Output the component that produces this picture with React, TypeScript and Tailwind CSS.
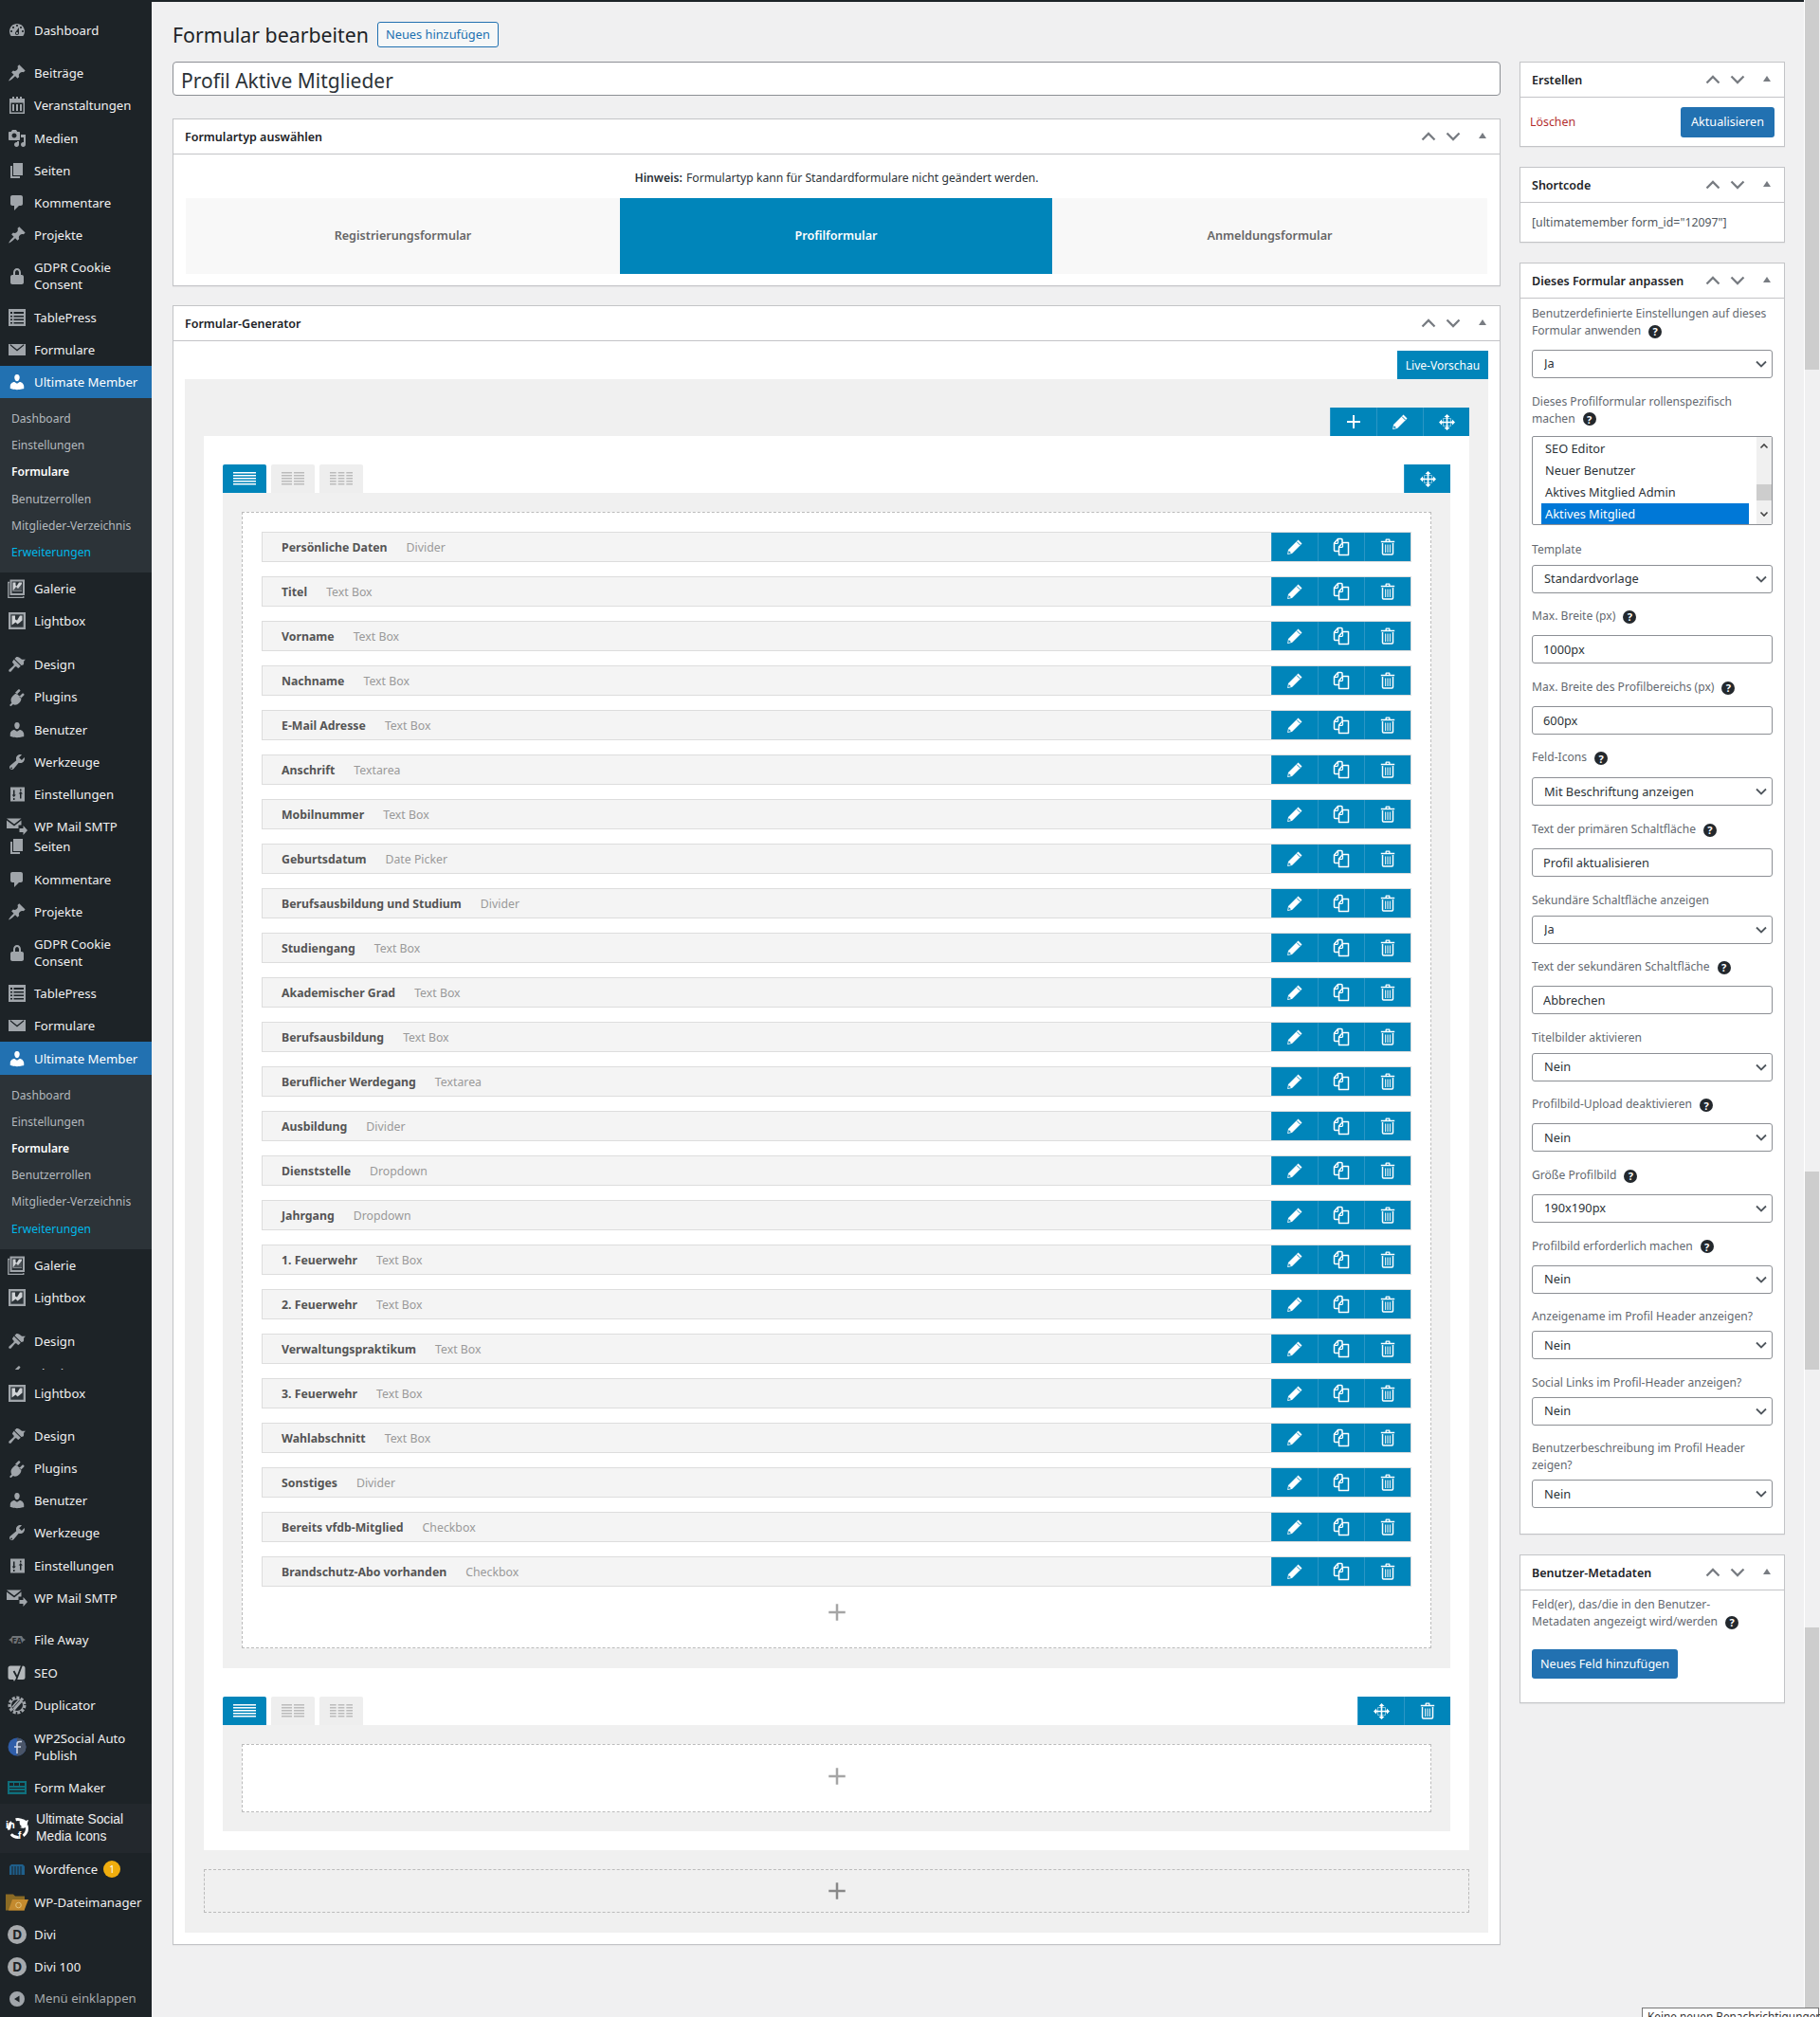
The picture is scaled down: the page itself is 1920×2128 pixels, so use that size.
import React from "react";

const P: Record<string, string> = {
  dashboard: "M3.76 16h12.48c1.1-1.37 1.76-3.11 1.76-5 0-4.42-3.58-8-8-8s-8 3.58-8 8c0 1.89.66 3.63 1.76 5zM10 4c.55 0 1 .45 1 1s-.45 1-1 1-1-.45-1-1 .45-1 1-1zM6 6c.55 0 1 .45 1 1s-.45 1-1 1-1-.45-1-1 .45-1 1-1zm8 0c.55 0 1 .45 1 1s-.45 1-1 1-1-.45-1-1 .45-1 1-1zm-5.37 5.55L12 7v6c0 1.1-.9 2-2 2s-2-.9-2-2c0-.57.24-1.08.63-1.45zM4 10c.55 0 1 .45 1 1s-.45 1-1 1-1-.45-1-1 .45-1 1-1zm12 0c.55 0 1 .45 1 1s-.45 1-1 1-1-.45-1-1 .45-1 1-1zm-5 3c0-.55-.45-1-1-1s-1 .45-1 1 .45 1 1 1 1-.45 1-1z",
  pin: "M10.44 3.02l1.82-1.82 6.36 6.35-1.83 1.82c-1.05-.68-2.48-.57-3.41.36l-.75.75c-.92.93-1.04 2.35-.35 3.41l-1.83 1.82-2.41-2.41-2.8 2.79c-.42.42-3.38 2.71-3.8 2.29s1.86-3.39 2.28-3.81l2.79-2.79L4.1 9.36l1.83-1.82c1.05.69 2.48.57 3.4-.36l.75-.75c.93-.92 1.05-2.35.36-3.41z",
  comment: "M5 2h9c1.1 0 2 .9 2 2v7c0 1.1-.9 2-2 2h-2l-5 5v-5H5c-1.1 0-2-.9-2-2V4c0-1.1.9-2 2-2z",
  page: "M6 15V2h10v13H6zm-1 1h8v2H3V5h2v11z",
  media: "M13 11V4c0-.55-.45-1-1-1h-1.67L9 1H5L3.67 3H2c-.55 0-1 .45-1 1v7c0 .55.45 1 1 1h10c.55 0 1-.45 1-1zM7 4.5c1.38 0 2.5 1.12 2.5 2.5S8.38 9.5 7 9.5 4.5 8.38 4.5 7 5.62 4.5 7 4.5zM14 6h5v10.5c0 1.38-1.12 2.5-2.5 2.5S14 17.88 14 16.5s1.12-2.5 2.5-2.5c.17 0 .34.02.5.05V9h-3V6zm-4 8.05V13h2v3.5c0 1.38-1.12 2.5-2.5 2.5S7 17.88 7 16.5 8.12 14 9.5 14c.17 0 .34.02.5.05z",
  user: "M10 9.25c-2.27 0-2.73-3.44-2.73-3.44C7 4.02 7.82 2 9.97 2c2.16 0 2.98 2.02 2.71 3.81 0 0-.41 3.44-2.68 3.44zm0 2.57L12.72 10c2.39 0 4.52 2.33 4.52 4.53v2.49s-3.65 1.13-7.24 1.13c-3.65 0-7.24-1.13-7.24-1.13v-2.49c0-2.25 1.94-4.48 4.47-4.48z",
  tools: "M16.68 9.77c-1.34 1.34-3.3 1.67-4.95.99l-5.41 6.52c-.99.99-2.59.99-3.57 0-.99-.98-.99-2.58 0-3.57l6.52-5.42c-.68-1.65-.35-3.61.99-4.95 1.28-1.28 3.12-1.62 4.72-1.06l-2.89 2.89 2.82 2.82 2.86-2.87c.53 1.58.18 3.39-1.09 4.65zM4.66 15.66c-.34-.34-.89-.34-1.24 0-.34.35-.34.9 0 1.24.35.35.9.35 1.24 0 .35-.34.35-.89 0-1.24z",
  plugin: "M13.11 4.36L9.87 7.6 8 5.73l3.24-3.24c.35-.34 1.05-.34 1.4 0l.47.47c.39.39.39 1.01 0 1.4zm4.2 4.2L14.07 11.8l-1.87-1.87 3.24-3.24c.35-.34 1.05-.34 1.4 0l.47.47c.39.39.39 1.01 0 1.4zm-7.42-1.6l4.15 4.15c.9 1.6-.2 3.9-1.9 5.6-1.91 1.91-4.5 2.6-6.2 1.4l-2.6 2.2-1.3-1.3 2.3-2.5C2.9 14.2 3.4 11.5 5.3 9.6c1.7-1.7 3-3.1 4.59-2.64z",
  brush: "M14.5 11L7.4 4l1.5-1.500c.5-.6 2.3-.5 3.5.3 1.200.8 1.500 1.300 2.200 1.600 1 .5 4.400.4 4.400.4s-1.700 1.100-1.900 2.200c-.2 1.200.5 2-.6 3.500zM6.700 4.700l7.100 7.100-1.800 1.800c-.4.4-1.100.4-1.500 0l-1-1c-.5-.5-1.400-.5-1.900.1L3.600 17.400c-.5.5-1.500.5-2 0s-.5-1.500 0-2l4.700-4.200c.5-.5.5-1.400 0-1.900l-1-1c-.4-.4-.4-1.100 0-1.500z",
  sliders: "M3 2.500h15v15H3zM6 5.500v5H4.600L6.700 13l2.100-2.500H7.500v-5zM6 14v2h1.500v-2zM13 4.500v2h1.500v-2zM13 9.500H11.700L13.800 7l2.100 2.500h-1.400v5H13z",
  mail: "M1 4h18v12H1zM2.800 4L10 9.800 17.200 4v1.500L10 11.600 2.800 5.500z",
  lock: "M14 9h1c1 0 2 .9 2 2v6c0 1.100-.9 2-2 2H5c-1.100 0-2-.9-2-2v-6c0-1.100 1-2 2-2h1V6.500C6 4 7.800 2 10 2s4 2 4 4.500zM8 9h4V6.500C12 5.100 11.100 4 10 4S8 5.100 8 6.500z",
  arrowL: "M10 2a8 8 0 1 0 0 16 8 8 0 0 0 0-16zm2.500 4.500v7L7 10z",
};

function Ic({ n, c = "#a0a5aa", s = 20 }: { n: string; c?: string; s?: number }) {
  return (
    <svg width={s} height={s} viewBox="0 0 20 20" fill={c} fillRule="evenodd">
      <path d={P[n]} />
    </svg>
  );
}

function Custom({ n }: { n: string }) {
  const c = "#a0a5aa";
  if (n === "calendar")
    return (
      <svg width="20" height="20" viewBox="0 0 20 20">
        <path fill={c} d="M2 3h3V1h2v2h2V1h2v2h2V1h2v2h3v16H2z" />
        <path fill="#1d2327" d="M3.500 7.500h13v10h-13z" />
        <path fill={c} d="M5 9h2v7H5zM9 9h2v7H9zM13 9h2v7h-2z" />
      </svg>
    );
  if (n === "table")
    return (
      <svg width="22" height="22" viewBox="0 0 22 22">
        <path fill={c} fillRule="evenodd" d="M2 2h18v18H2zM4 5v2h2V5zM7.500 5v2H18V5zM4 9v1.500h2V9zM7.500 9v1.500H18V9zM4 12.500V14h2v-1.500zM7.500 12.500V14H18v-1.500zM4 16v1.500h2V16zM7.500 16v1.500H18V16z" />
      </svg>
    );
  if (n === "gallery")
    return (
      <svg width="20" height="20" viewBox="0 0 20 20">
        <path fill="none" stroke={c} strokeWidth="1.300" d="M2 3.500H.8v16h16v-1.500" />
        <path fill={c} d="M2.500 .5h15.500v16.500H2.500z" />
        <path fill="#2c3338" d="M4.500 2.500h11.500v12.500H4.500z" />
        <path fill="#d0d3d6" d="M5.500 3.500h3v3l1 1 2.500-4h3v9h-9.500z" />
        <path fill="#2c3338" d="M6 12l3-4 2 2 4-5v7z" opacity="0.800" />
      </svg>
    );
  if (n === "lightbox")
    return (
      <svg width="20" height="20" viewBox="0 0 20 20">
        <path fill={c} d="M1 1h18v18H1z" />
        <path fill="#2c3338" d="M3.300 3.300h13.400v13.400H3.300z" />
        <path fill="#d0d3d6" d="M4.500 4.500h3.500v4l2 1 3-5h2.500v5l-3 2.500-2 1.500-2-2-4 3z" />
      </svg>
    );
  if (n === "smtp")
    return (
      <svg width="22" height="22" viewBox="0 0 22 22">
        <path fill={c} d="M0 2.500h15.500L8 8.500zM0 4.500l8 6 7.500-6v5h-3v3.500H0z" />
        <path fill={c} d="M13.500 13h4v-3l4.500 5-4.500 5v-3h-4z" />
      </svg>
    );
  if (n === "fa")
    return (
      <svg width="20" height="20" viewBox="0 0 20 20">
        <path fill="#6f7478" d="M1 10l2.500-1.500L5 6h10l1.500 2.500L19 10l-2.500 1.500L15 14H5l-1.500-2.500z" />
        <text x="10" y="13.500" fontSize="9" textAnchor="middle" fill="#1d2327" fontWeight="700">FA</text>
      </svg>
    );
  if (n === "seo")
    return (
      <svg width="20" height="20" viewBox="0 0 20 20">
        <path fill="#b4b8bb" d="M3 2.500h13a2.500 2.500 0 0 1 2.500 2.500v9.500a2.500 2.500 0 0 1-2.500 2.500H8l-1 2-1-2H3A2.500 2.500 0 0 1 .5 14.500V5A2.500 2.500 0 0 1 3 2.500z" />
        <path fill="none" stroke="#1d2327" strokeWidth="1.800" d="M6.500 8l3.500 6.500M15.500.5L8.500 19" />
      </svg>
    );
  if (n === "dup")
    return (
      <svg width="22" height="22" viewBox="0 0 22 22">
        <circle cx="11" cy="11" r="8" fill="none" stroke={c} strokeWidth="3" strokeDasharray="3 1.600" />
        <circle cx="11" cy="11" r="6.600" fill="none" stroke={c} strokeWidth="1.200" />
        <path stroke={c} strokeWidth="1.500" d="M6 13l7-8M8 16l8-9M7 15l8-9" />
      </svg>
    );
  if (n === "wp2s")
    return (
      <svg width="20" height="20" viewBox="0 0 20 20">
        <circle cx="10" cy="10" r="9.500" fill="#2f5da8" />
        <path fill="#4a5568" d="M10 .5a9.500 9.500 0 0 1 0 19z" />
        <path fill="none" stroke="#cfd6e6" strokeWidth="1.600" d="M15 4.500h-2.500c-1.500 0-2.500.8-2.500 2.500v10M7 10h7" />
      </svg>
    );
  if (n === "formmaker")
    return (
      <svg width="20" height="16" viewBox="0 0 20 16">
        <path fill="#0f6f7c" d="M0 1h20v14H0z" />
        <path fill="#1d2327" d="M2 3h4v3H2zM7 3h5v3H7zM13 3h5v3h-5zM2 8h16v1H2zM2 11h16v1.500H2z" />
      </svg>
    );
  if (n === "usmi")
    return (
      <svg width="26" height="26" viewBox="0 0 26 26">
        <circle cx="13" cy="13" r="9.500" fill="none" stroke="#fff" strokeWidth="3" strokeDasharray="9 5" />
        <text x="0" y="13" fontSize="11" fontWeight="700" fill="#fff">in</text>
        <text x="13" y="24" fontSize="10" fontWeight="700" fill="#fff">f</text>
        <path fill="#fff" d="M15 5c2-2 5-2 6 0l3-1-1 3c0 5-4 7-8 5 1 0 2-1 2-1-2-1-3-4-2-6z" />
      </svg>
    );
  if (n === "wordfence")
    return (
      <svg width="18" height="12" viewBox="0 0 18 12">
        <path fill="#1f5f8b" d="M1 3l2-2h12l2 2v9H1z" />
        <path stroke="#1d2327" d="M4 3v9M7 3v9M10 3v9M13 3v9" />
      </svg>
    );
  if (n === "folder")
    return (
      <svg width="24" height="18" viewBox="0 0 24 18">
        <path fill="#8a6a24" d="M0 .5h8l2 2h10v15H0z" />
        <path fill="#c48a2e" d="M3 17.500L7 6h17l-4.500 11.500z" />
        <circle cx="13.500" cy="12" r="2.800" fill="none" stroke="#e2c27c" strokeWidth="1" />
      </svg>
    );
  if (n === "divi")
    return (
      <span className="flex h-[20px] w-[20px] items-center justify-center rounded-full bg-[#a7aaad] text-[14px] font-bold leading-none text-[#1d2327]">
        D
      </span>
    );
  return null;
}

type Item = { l: string; i: string; two?: boolean; clip?: boolean; c?: boolean };

function MenuItem({ l, i, two, clip, c, cur, badge }: Item & { cur?: boolean; badge?: boolean }) {
  const lines = l.split("|");
  return (
    <div className={(clip ? "h-[13px] overflow-hidden " : "") + (cur ? "bg-[#2271b1] text-white " : "text-[#f0f0f1] ")}>
      <div className={(two ? "h-[52.2px] " : "h-[34.2px] ") + "flex items-center"}>
        <div className="flex w-[36px] shrink-0 items-center justify-center">
          {c ? <Custom n={i} /> : <Ic n={i} c={cur ? "#fff" : "#a0a5aa"} />}
        </div>
        <div className="text-[13.2px] leading-[18px]">
          {lines.map((t) => (
            <div key={t} className="whitespace-nowrap">{t}</div>
          ))}
        </div>
        {badge && (
          <span className="ml-[6px] flex h-[18px] w-[18px] items-center justify-center rounded-full bg-[#f0ad0e] text-[10px] text-white">1</span>
        )}
      </div>
    </div>
  );
}

const Sub = () => (
  <div className="bg-[#2c3338] pb-[7px] pt-[8px] text-[12.1px] text-[#b4b9be]">
    {["Dashboard", "Einstellungen", "Formulare", "Benutzerrollen", "Mitglieder-Verzeichnis", "Erweiterungen"].map((t) => (
      <div
        key={t}
        className={
          "flex h-[28.2px] items-center pl-[12px] " +
          (t === "Formulare" ? "font-semibold text-white" : t === "Erweiterungen" ? "text-[#00b9eb]" : "")
        }
      >
        {t}
      </div>
    ))}
  </div>
);

const first: Item[] = [
  { l: "Beiträge", i: "pin" },
  { l: "Veranstaltungen", i: "calendar", c: true },
  { l: "Medien", i: "media" },
  { l: "Seiten", i: "page" },
  { l: "Kommentare", i: "comment" },
  { l: "Projekte", i: "pin" },
  { l: "GDPR Cookie|Consent", i: "lock", two: true },
  { l: "TablePress", i: "table", c: true },
  { l: "Formulare", i: "mail" },
];
const lower: Item[] = [
  { l: "Plugins", i: "plugin" },
  { l: "Benutzer", i: "user" },
  { l: "Werkzeuge", i: "tools" },
  { l: "Einstellungen", i: "sliders" },
];

function Sidebar() {
  return (
    <aside className="h-full w-[160px] shrink-0 overflow-hidden bg-[#1d2327] pt-[15px]">
      <MenuItem l="Dashboard" i="dashboard" />
      <div className="h-[11px]" />
      {first.map((m) => <MenuItem key={m.l} {...m} />)}
      <MenuItem l="Ultimate Member" i="user" cur />
      <Sub />
      <MenuItem l="Galerie" i="gallery" c />
      <MenuItem l="Lightbox" i="lightbox" c />
      <div className="h-[11.6px]" />
      <MenuItem l="Design" i="brush" />
      {lower.map((m) => <MenuItem key={m.l} {...m} />)}
      <MenuItem l="WP Mail SMTP" i="smtp" c />
      <div className="-mt-[13px]" />
      {first.map((m) => <MenuItem key={m.l + "2"} {...m} />).slice(3)}
      <MenuItem l="Ultimate Member" i="user" cur />
      <Sub />
      <MenuItem l="Galerie" i="gallery" c />
      <MenuItem l="Lightbox" i="lightbox" c />
      <div className="h-[12px]" />
      <MenuItem l="Design" i="brush" />
      <MenuItem l="Plugins" i="plugin" clip />
      <div className="h-[8px]" />
      <MenuItem l="Lightbox" i="lightbox" c />
      <div className="h-[10.2px]" />
      <MenuItem l="Design" i="brush" />
      {lower.map((m) => <MenuItem key={m.l + "3"} {...m} />)}
      <MenuItem l="WP Mail SMTP" i="smtp" c />
      <div className="h-[10.6px]" />
      <MenuItem l="File Away" i="fa" c />
      <MenuItem l="SEO" i="seo" c />
      <MenuItem l="Duplicator" i="dup" c />
      <div className="h-[1px]" />
      <MenuItem l="WP2Social Auto|Publish" i="wp2s" c two />
      <MenuItem l="Form Maker" i="formmaker" c />
      <div className="flex h-[52px] items-center bg-[#23282d] font-['Liberation_Sans',sans-serif] text-[#f0f0f1]">
        <div className="flex w-[38px] shrink-0 items-center justify-center"><Custom n="usmi" /></div>
        <div className="text-[13.8px] leading-[18px]">Ultimate Social<br />Media Icons</div>
      </div>
      <MenuItem l="Wordfence" i="wordfence" c badge />
      <MenuItem l="WP-Dateimanager" i="folder" c />
      <MenuItem l="Divi" i="divi" c />
      <MenuItem l="Divi 100" i="divi" c />
      <div className="flex h-[34px] items-center text-[#a7aaad]">
        <div className="flex w-[36px] shrink-0 items-center justify-center"><Ic n="arrowL" /></div>
        <div className="text-[13.2px]">Menü einklappen</div>
      </div>
    </aside>
  );
}

function HeaderCtl() {
  return (
    <div className="flex items-center">
      <svg width="16" height="16" viewBox="0 0 16 16" className="mr-[10px]"><path d="M1.500 11.500L8 5l6.500 6.500" fill="none" stroke="#787c82" strokeWidth="2.300" /></svg>
      <svg width="16" height="16" viewBox="0 0 16 16" className="mr-[18px]"><path d="M1.500 4.500L8 11l6.500-6.500" fill="none" stroke="#787c82" strokeWidth="2.300" /></svg>
      <svg width="10" height="8" viewBox="0 0 10 8" className="mb-[3px] mr-[13px]"><path d="M5 1l4 6H1z" fill="#787c82" /></svg>
    </div>
  );
}

function Box({ title, className = "", children }: { title: string; className?: string; children: React.ReactNode }) {
  return (
    <section className={"border border-[#c3c4c7] bg-white shadow-[0_1px_1px_rgba(0,0,0,0.04)] " + className}>
      <div className="flex h-[37px] items-center justify-between border-b border-[#c3c4c7] pl-[12px]">
        <h2 className="pt-[2px] text-[12.5px] font-semibold text-[#1d2327]">{title}</h2>
        <HeaderCtl />
      </div>
      {children}
    </section>
  );
}

const Pencil = ({ s = 18 }: { s?: number }) => (
  <svg width={s} height={s} viewBox="0 0 18 18">
    <path fill="#fff" d="M12.500 1.500l4 4L6 16l-4.800 1L2 12zM2.700 13l-.6 2.900 2.900-.6z" />
    <path stroke="#0085ba" strokeWidth="1" d="M11 3.500l3.500 3.500" />
  </svg>
);
const Copy = () => (
  <svg width="20" height="20" viewBox="0 0 20 20" fill="none" stroke="#fff" strokeWidth="1.500" strokeLinejoin="round">
    <path d="M7 14.500H3.500c-.6 0-1-.4-1-1V6l4-4.500h3.500c.6 0 1 .4 1 1V5.500" />
    <path d="M6.500 2v3.500c0 .5-.3.8-.8.8H2.500" strokeWidth="1.200" />
    <path d="M7.500 18.500V10l4-4.500h6v13z" />
    <path d="M11.500 6v3.500c0 .5-.3.8-.8.8H7.500" strokeWidth="1.200" />
  </svg>
);
const Trash = () => (
  <svg width="16" height="18" viewBox="0 0 16 18">
    <path fill="#fff" d="M.8 2.800h4.700V1.500C5.500 1 6 .5 6.500.5h3c.5 0 1 .5 1 1v1.300h4.700v1.500H.8zM6.800 2.800h2.400V1.800H6.800z" />
    <path fill="none" stroke="#fff" strokeWidth="1.500" d="M2.500 5v11c0 .6.400 1 1 1h9c.6 0 1-.4 1-1V5" />
    <path fill="#d7e8f1" d="M5 6.500h1.200V15H5zM7.400 6.500h1.200V15H7.400zM9.800 6.500H11V15H9.800z" />
  </svg>
);
const Move = () => (
  <svg width="17" height="17" viewBox="0 0 17 17" fill="#fff">
    <path d="M8.500 0l3 3h-2v1H7.500V3h-2zM8.500 17l-3-3h2v-1h2v1h2zM0 8.500l3-3v2h1v2H3v2zM17 8.500l-3 3v-2h-1v-2h1v-2z" />
    <path d="M3.700 7.700h9.600v1.600H3.700zM7.700 3.700h1.600v9.600H7.700z" />
    <path fill="none" stroke="#fff" strokeWidth="1" d="M4.500 4.500h8v8h-8z" opacity="0.500" />
  </svg>
);
const Plus = ({ c = "#fff", s = 16 }: { c?: string; s?: number }) => (
  <svg width={s} height={s} viewBox="0 0 16 16"><path fill={c} d="M7 1h2v6h6v2H9v6H7V9H1V7h6z" /></svg>
);

function Act({ children }: { children: React.ReactNode }) {
  return (
    <div className="flex h-[30px] w-[49px] items-center justify-center border-l border-[#2b96c5] bg-[#0085ba]">{children}</div>
  );
}

const fields: [string, string][] = [
  ["Persönliche Daten", "Divider"],
  ["Titel", "Text Box"],
  ["Vorname", "Text Box"],
  ["Nachname", "Text Box"],
  ["E-Mail Adresse", "Text Box"],
  ["Anschrift", "Textarea"],
  ["Mobilnummer", "Text Box"],
  ["Geburtsdatum", "Date Picker"],
  ["Berufsausbildung und Studium", "Divider"],
  ["Studiengang", "Text Box"],
  ["Akademischer Grad", "Text Box"],
  ["Berufsausbildung", "Text Box"],
  ["Beruflicher Werdegang", "Textarea"],
  ["Ausbildung", "Divider"],
  ["Dienststelle", "Dropdown"],
  ["Jahrgang", "Dropdown"],
  ["1. Feuerwehr", "Text Box"],
  ["2. Feuerwehr", "Text Box"],
  ["Verwaltungspraktikum", "Text Box"],
  ["3. Feuerwehr", "Text Box"],
  ["Wahlabschnitt", "Text Box"],
  ["Sonstiges", "Divider"],
  ["Bereits vfdb-Mitglied", "Checkbox"],
  ["Brandschutz-Abo vorhanden", "Checkbox"],
];

function Field({ name, type }: { name: string; type: string }) {
  return (
    <div className="mb-[15px] flex h-[32px] items-center border border-[#dddddd] bg-[#f4f4f4] pl-[20px]">
      <span className="pt-[3px] text-[12.3px] font-bold text-[#555]">{name}</span>
      <span className="ml-[20px] pt-[3px] text-[12.3px] text-[#999]">{type}</span>
      <div className="ml-auto flex">
        <Act><Pencil /></Act>
        <Act><Copy /></Act>
        <Act><Trash /></Act>
      </div>
    </div>
  );
}

function ColIcon({ cols, c }: { cols: number; c: string }) {
  const w = 24;
  const gap = 2;
  const cw = (w - gap * (cols - 1)) / cols;
  const xs = Array.from({ length: cols }, (_, i) => i * (cw + gap));
  return (
    <svg width={w} height="16" viewBox="0 0 24 16">
      {xs.map((x) => [1, 4, 7, 10, 13].map((y) => <rect key={x + "-" + y} x={x} y={y} width={cw} height="1.500" fill={c} />))}
    </svg>
  );
}

function Tabs() {
  return (
    <div className="flex gap-[5px]">
      <div className="flex h-[30px] w-[46px] items-center justify-center rounded-t-[2px] bg-[#0085ba]"><ColIcon cols={1} c="#fff" /></div>
      <div className="flex h-[30px] w-[46px] items-center justify-center rounded-t-[2px] bg-[#eee]"><ColIcon cols={2} c="#bbb" /></div>
      <div className="flex h-[30px] w-[46px] items-center justify-center rounded-t-[2px] bg-[#eee]"><ColIcon cols={3} c="#bbb" /></div>
    </div>
  );
}

function Help() {
  return (
    <span className="-my-[4px] ml-[8px] inline-flex h-[14px] w-[14px] items-center justify-center rounded-full bg-[#23282d] align-middle text-[11px] font-bold leading-none text-white">?</span>
  );
}

function Label({ children, help, gap }: { children: React.ReactNode; help?: boolean; gap: string }) {
  return (
    <div className={"text-[12.1px] leading-[18px] text-[#646970] " + gap}>
      {children}
      {help && <Help />}
    </div>
  );
}

function Sel({ v }: { v: string }) {
  return (
    <div className="relative mb-[15.6px]">
      <select
        defaultValue={v}
        className="block h-[30px] w-full appearance-none rounded-[3px] border border-[#8c8f94] bg-white pl-[12px] text-[12.8px] text-[#2c3338]"
      >
        <option>{v}</option>
      </select>
      <svg width="12" height="8" viewBox="0 0 12 8" className="pointer-events-none absolute right-[6px] top-[11px]">
        <path d="M1 1.500l5 5 5-5" fill="none" stroke="#50575e" strokeWidth="1.800" />
      </svg>
    </div>
  );
}

function Inp({ v }: { v: string }) {
  return (
    <input
      readOnly
      value={v}
      className="mb-[15.6px] block h-[30px] w-full rounded-[3px] border border-[#8c8f94] bg-white pl-[11px] text-[12.8px] text-[#2c3338]"
    />
  );
}

function ListBox() {
  const opts = ["SEO Editor", "Neuer Benutzer", "Aktives Mitglied Admin", "Aktives Mitglied"];
  return (
    <div className="mb-[17px] flex h-[94px] overflow-hidden rounded-[2px] border border-[#8c8f94] bg-white">
      <div className="flex-1 pl-[9px] pt-[1px]">
        {opts.map((o, i) => (
          <div
            key={o}
            className={
              "flex h-[23px] items-center pl-[4px] text-[12.8px] " +
              (i === 3 ? "bg-[#0078d7] text-white" : "text-[#2c3338]")
            }
          >
            {o}
          </div>
        ))}
      </div>
      <div className="ml-[8px] flex w-[16px] flex-col items-center bg-[#f0f0f0]">
        <svg width="10" height="8" viewBox="0 0 10 8" className="mt-[6px]"><path d="M1.500 5.500L5 2l3.500 3.500" fill="none" stroke="#444" strokeWidth="1.600" /></svg>
        <div className="mt-[36px] h-[17px] w-full bg-[#cdcdcd]" />
        <svg width="10" height="8" viewBox="0 0 10 8" className="mt-[10px]"><path d="M1.500 2.500L5 6l3.500-3.500" fill="none" stroke="#444" strokeWidth="1.600" /></svg>
      </div>
    </div>
  );
}

function Right() {
  return (
    <div className="w-[280px] shrink-0">
      <Box title="Erstellen" className="h-[90px]">
        <div className="flex items-center justify-between pl-[10px] pr-[10px] pt-[10px]">
          <span className="text-[12.4px] text-[#b32d2e]">Löschen</span>
          <div className="flex h-[32px] w-[99px] items-center justify-center rounded-[3px] bg-[#2271b1] pt-[1px] text-[12.6px] text-white">Aktualisieren</div>
        </div>
      </Box>
      <Box title="Shortcode" className="mt-[21px] h-[80px]">
        <div className="pl-[12px] pt-[12px] text-[12.3px] leading-[18px] text-[#50575e]">[ultimatemember form_id="12097"]</div>
      </Box>
      <Box title="Dieses Formular anpassen" className="mt-[21px] h-[1342px]">
        <div className="px-[12px] pt-[7px]">
          <Label help gap="mb-[11px]">Benutzerdefinierte Einstellungen auf dieses<br />Formular anwenden</Label>
          <Sel v="Ja" />
          <Label help gap="mb-[9px]">Dieses Profilformular rollenspezifisch<br />machen</Label>
          <ListBox />
          <Label gap="mb-[7px]">Template</Label>
          <Sel v="Standardvorlage" />
          <Label help gap="mb-[11px]">Max. Breite (px)</Label>
          <Inp v="1000px" />
          <Label help gap="mb-[11px]">Max. Breite des Profilbereichs (px)</Label>
          <Inp v="600px" />
          <Label help gap="mb-[12px]">Feld-Icons</Label>
          <Sel v="Mit Beschriftung anzeigen" />
          <Label help gap="mb-[11px]">Text der primären Schaltfläche</Label>
          <Inp v="Profil aktualisieren" />
          <Label gap="mb-[7px]">Sekundäre Schaltfläche anzeigen</Label>
          <Sel v="Ja" />
          <Label help gap="mb-[11px]">Text der sekundären Schaltfläche</Label>
          <Inp v="Abbrechen" />
          <Label gap="mb-[7px]">Titelbilder aktivieren</Label>
          <Sel v="Nein" />
          <Label help gap="mb-[11px]">Profilbild-Upload deaktivieren</Label>
          <Sel v="Nein" />
          <Label help gap="mb-[11px]">Größe Profilbild</Label>
          <Sel v="190x190px" />
          <Label help gap="mb-[11px]">Profilbild erforderlich machen</Label>
          <Sel v="Nein" />
          <Label gap="mb-[6px]">Anzeigename im Profil Header anzeigen?</Label>
          <Sel v="Nein" />
          <Label gap="mb-[6px]">Social Links im Profil-Header anzeigen?</Label>
          <Sel v="Nein" />
          <Label gap="mb-[6px]">Benutzerbeschreibung im Profil Header<br />zeigen?</Label>
          <Sel v="Nein" />
        </div>
      </Box>
      <Box title="Benutzer-Metadaten" className="mt-[21px] h-[157px]">
        <div className="px-[12px] pt-[6px]">
          <Label help gap="mb-[20px]">Feld(er), das/die in den Benutzer-<br />Metadaten angezeigt wird/werden</Label>
          <div className="flex h-[31px] w-[154px] items-center justify-center rounded-[3px] bg-[#2271b1] pt-[2px] text-[12.6px] text-white">Neues Feld hinzufügen</div>
        </div>
      </Box>
    </div>
  );
}

function Left() {
  return (
    <div className="w-[1401px] shrink-0">
      <div className="flex h-[63px] items-start pt-[17px]">
        <h1 className="text-[21.3px] leading-[36px] text-[#1d2327]">Formular bearbeiten</h1>
        <div className="ml-[9px] mt-[4px] flex h-[27px] w-[128px] items-center justify-center rounded-[3px] border border-[#2271b1] bg-[#f6f7f7] pt-[1px] text-[12.8px] text-[#2271b1]">Neues hinzufügen</div>
      </div>
      <input
        readOnly
        value="Profil Aktive Mitglieder"
        className="block h-[36px] w-full rounded-[4px] border border-[#8c8f94] bg-white pl-[8px] pt-[4px] text-[21px] text-[#2c3338]"
      />
      <Box title="Formulartyp auswählen" className="mt-[24px] h-[177px]">
        <div className="px-[13px]">
          <div className="flex h-[46px] items-center justify-center pt-[5px] text-[12.2px] text-[#2c3338]">
            <b className="mr-[4px] font-semibold">Hinweis:</b> Formulartyp kann für Standardformulare nicht geändert werden.
          </div>
          <div className="flex h-[80px] text-[12.6px] font-semibold">
            <div className="flex w-[458px] items-center justify-center bg-[#f8f8f8] pt-[1px] text-[#666]">Registrierungsformular</div>
            <div className="flex w-[456px] items-center justify-center bg-[#0085ba] pt-[1px] text-white">Profilformular</div>
            <div className="flex flex-1 items-center justify-center bg-[#f8f8f8] pt-[1px] text-[#666]">Anmeldungsformular</div>
          </div>
        </div>
      </Box>
      <Box title="Formular-Generator" className="mt-[20px] h-[1730px]">
        <div className="px-[12px]">
          <div className="flex h-[40px] items-end justify-end">
            <div className="flex h-[30px] w-[96px] items-center justify-center bg-[#0085ba] pt-[1px] text-[12px] text-white">Live-Vorschau</div>
          </div>
          <div className="h-[1639px] bg-[#f0f0f0] px-[20px] pt-[30px]">
            <div className="flex justify-end">
              <Act><Plus /></Act>
              <Act><Pencil /></Act>
              <Act><Move /></Act>
            </div>
            <div className="h-[1492px] bg-white px-[20px] pt-[30px]">
              <div className="flex items-end justify-between">
                <Tabs />
                <Act><Move /></Act>
              </div>
              <div className="h-[1240px] bg-[#f0f0f0] px-[20px] pt-[20px]">
                <div className="h-[1199px] border border-dashed border-[#bbb] bg-white px-[20px] pt-[20px]">
                  {fields.map(([n, t]) => <Field key={n} name={n} type={t} />)}
                  <div className="flex justify-center pt-[2px]"><Plus c="#a5a5a5" s={20} /></div>
                </div>
              </div>
              <div className="mt-[30px] flex items-end justify-between">
                <Tabs />
                <div className="flex">
                  <Act><Move /></Act>
                  <Act><Trash /></Act>
                </div>
              </div>
              <div className="h-[112px] bg-[#f0f0f0] p-[20px]">
                <div className="flex h-[72px] items-center justify-center border border-dashed border-[#bbb] bg-white pb-[5px]"><Plus c="#a5a5a5" s={20} /></div>
              </div>
            </div>
            <div className="mt-[20px] flex h-[46px] items-center justify-center border border-dashed border-[#bbb]"><Plus c="#888" s={20} /></div>
          </div>
        </div>
      </Box>
    </div>
  );
}

function Scrollbar() {
  return (
    <div className="flex h-full w-[17px] shrink-0 flex-col border-l border-white bg-[#f0f0f1]">
      <div className="h-[390px] w-[15px] bg-[#cdcdcd]" />
      <div className="mt-[846px] h-[209px] w-[15px] bg-[#cdcdcd]" />
      <div className="mt-[272px] h-[411px] w-[15px] bg-[#cdcdcd]" />
    </div>
  );
}

export default function App() {
  return (
    <div className="relative flex h-[2128px] w-[1920px] overflow-hidden bg-[#f0f0f1] font-['Noto_Sans',sans-serif]">
      <Sidebar />
      <main className="flex-1">
        <div className="h-[2px] bg-[#1d2327]" />
        <div className="flex gap-[20px] pl-[22px]">
          <Left />
          <div className="pt-[63px]"><Right /></div>
        </div>
      </main>
      <Scrollbar />
      <div className="absolute left-[1732px] top-[2118px] h-[20px] w-[187px] whitespace-nowrap border border-[#767676] bg-white px-[5px] text-[11.8px] text-[#333]">Keine neuen Benachrichtigungen</div>
    </div>
  );
}
